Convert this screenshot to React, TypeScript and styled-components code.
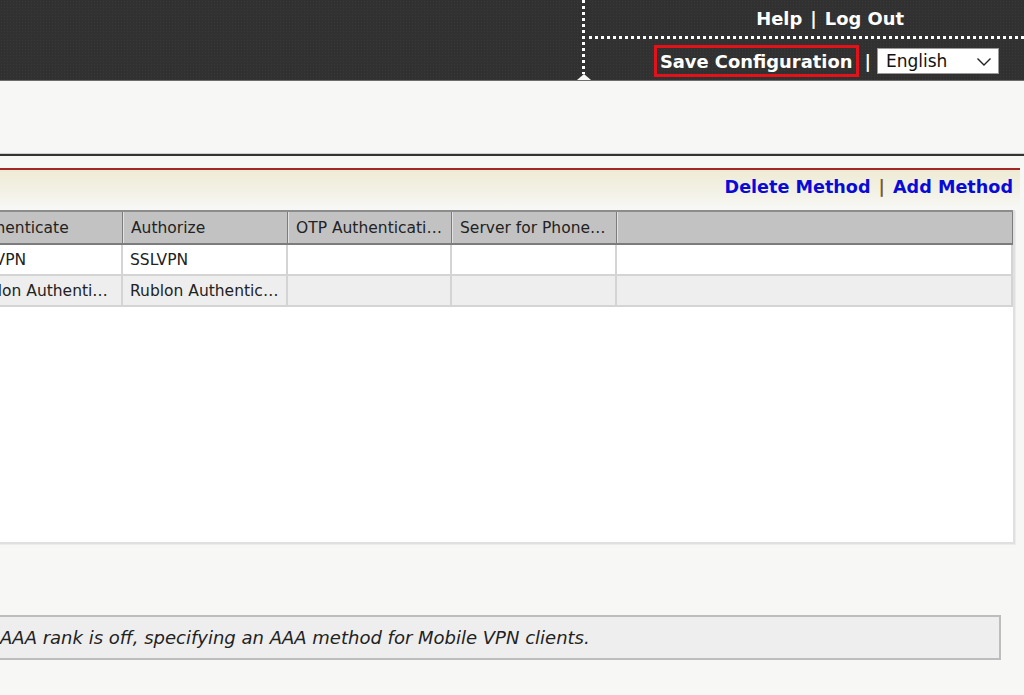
import React from 'react';
import styled, { createGlobalStyle } from 'styled-components';

const Global = createGlobalStyle`
  html, body { margin: 0; padding: 0; background: #f7f7f5; overflow: hidden; }
  body { font-family: "DejaVu Sans", Verdana, sans-serif; color: #222; }
  * { box-sizing: border-box; }
`;

const OFFSET = 39;

const Page = styled.div`
  width: 1024px;
  height: 695px;
  overflow: hidden;
  display: flex;
  flex-direction: column;
`;

const Header = styled.header`
  flex-shrink: 0;
  height: 81px;
  background-color: #313131;
  background-image: radial-gradient(rgba(255,255,255,0.04) 0.7px, transparent 0.9px);
  background-size: 3px 3px;
  border-bottom: 1px solid #6e6e6e;
  display: flex;
  justify-content: flex-end;
`;

const Panel = styled.div`
  width: 442px;
  display: flex;
  position: relative;
`;

const VDots = styled.div`
  width: 3px;
  margin-bottom: 6px;
  background: repeating-linear-gradient(to bottom, #fff 0 3px, transparent 3px 6px);
`;

const Notch = styled.div`
  position: absolute;
  left: -5px;
  bottom: 0;
  width: 0;
  height: 0;
  border-left: 7px solid transparent;
  border-right: 7px solid transparent;
  border-bottom: 6px solid #f7f7f5;
`;

const PanelBody = styled.div`
  flex: 1;
  display: flex;
  flex-direction: column;
`;

const TopRow = styled.div`
  height: 36px;
  display: flex;
  align-items: center;
  justify-content: flex-end;
  padding-right: 120px;
  gap: 8px;
`;

const HDots = styled.div`
  height: 3px;
  margin-left: 4px;
  background: repeating-linear-gradient(to right, #fff 0 3px, transparent 3px 6px);
`;

const BottomRow = styled.div`
  flex: 1;
  display: flex;
  align-items: center;
  justify-content: flex-end;
  padding: 3px 25px 0 0;
  gap: 5px;
`;

const HeadLink = styled.a`
  color: #fff;
  font-weight: bold;
  font-size: 17.9px;
  text-decoration: none;
  white-space: nowrap;
`;

const Pipe = styled.span`
  color: #fff;
  font-weight: bold;
  font-size: 17.9px;
`;

const SaveBox = styled.a`
  display: flex;
  align-items: center;
  height: 32px;
  border: 3px solid #e2121b;
  padding: 0 4px 0 3px;
  color: #fff;
  font-weight: bold;
  font-size: 17.9px;
  text-decoration: none;
  white-space: nowrap;
`;

const SelectWrap = styled.div`
  position: relative;
  width: 122px;
  height: 26px;
  margin-left: 1px;
  background: #fff;
  border: 1px solid #9a9a9a;
  display: flex;
  align-items: center;
  padding-left: 8px;
  font-size: 17px;
  color: #111;
`;

const Chevron = styled.svg`
  position: absolute;
  right: 6px;
  top: 7px;
`;

const Main = styled.main`
  width: ${1024 + OFFSET}px;
  margin-left: -${OFFSET}px;
  display: flex;
  flex-direction: column;
`;

const DarkRule = styled.div`
  margin-top: 72px;
  height: 3px;
  background: #333;
  border-top: 1px solid #cfcfcf;
`;

const ToolBand = styled.div`
  margin: 12px 4px 0 0;
  height: 40px;
  border-top: 2px solid #a32727;
  background: linear-gradient(to bottom, #eeebd4 0%, #f2f0e2 45%, #f7f7f5 100%);
  display: flex;
  align-items: center;
  justify-content: flex-end;
  padding: 0 7px 4px 0;
  gap: 8px;
`;

const ActionLink = styled.a`
  color: #0a0ad8;
  font-weight: bold;
  font-size: 17.6px;
  text-decoration: none;
  white-space: nowrap;
`;

const ActionPipe = styled.span`
  color: #7a5a2a;
  font-weight: bold;
  font-size: 17.6px;
`;

const TableFrame = styled.div`
  margin: 2px 9px 0 0;
  height: 334px;
  background: #fff;
  border-right: 2px solid #e0e0e0;
  border-bottom: 2px solid #e0e0e0;
  box-shadow: 1px 1px 0 #ececec;
`;

const COLS = `${123 + OFFSET}px 165px 164px 165px 1fr`;

const HeadRow = styled.div`
  display: grid;
  grid-template-columns: ${COLS};
  height: 35px;
  background: #c2c2c2;
  border-top: 2px solid #8c8c8c;
  border-bottom: 2px solid #7c7c7c;
`;

const HeadCell = styled.div`
  display: flex;
  align-items: center;
  padding: 0 7px;
  font-size: 15.5px;
  color: #222;
  border-left: 1px solid #e2e2e2;
  border-right: 1px solid #7c7c7c;
  white-space: nowrap;
  overflow: hidden;
  min-width: 0;
  span { overflow: hidden; text-overflow: ellipsis; }
`;

const BodyRow = styled.div<{ $alt?: boolean }>`
  display: grid;
  grid-template-columns: ${COLS};
  height: 31px;
  background: ${p => (p.$alt ? '#eeeeee' : '#ffffff')};
  border-bottom: 2px solid #d4d4d4;
`;

const Cell = styled.div`
  display: flex;
  align-items: center;
  padding: 0 7px;
  font-size: 15.5px;
  color: #222;
  border-right: 2px solid #d4d4d4;
  white-space: nowrap;
  overflow: hidden;
  min-width: 0;
  span { overflow: hidden; text-overflow: ellipsis; }
`;

const Notice = styled.div`
  margin: 71px 23px 0 0;
  height: 45px;
  background: #eeeeee;
  border: 2px solid #bdbdbd;
  display: flex;
  align-items: center;
  padding-left: ${OFFSET - 2}px;
  font-style: italic;
  font-size: 18px;
  color: #222;
  white-space: nowrap;
`;

const headers = ['Authenticate', 'Authorize', 'OTP Authentication Server', 'Server for Phone Factor', ''];
const rows = [
  ['SSLVPN', 'SSLVPN', '', '', ''],
  ['Rublon Authentication', 'Rublon Authentication', '', '', ''],
];

export default function App() {
  return (
    <Page>
      <Global />
      <Header>
        <Panel>
          <VDots />
          <Notch />
          <PanelBody>
            <TopRow>
              <HeadLink href="#">Help</HeadLink>
              <Pipe>|</Pipe>
              <HeadLink href="#">Log Out</HeadLink>
            </TopRow>
            <HDots />
            <BottomRow>
              <SaveBox href="#">Save Configuration</SaveBox>
              <Pipe>|</Pipe>
              <SelectWrap>
                English
                <Chevron width="16" height="11" viewBox="0 0 16 11" fill="none">
                  <path d="M1.5 2.5 L8 9 L14.5 2.5" stroke="#222" strokeWidth="1.4" />
                </Chevron>
              </SelectWrap>
            </BottomRow>
          </PanelBody>
        </Panel>
      </Header>
      <Main>
        <DarkRule />
        <ToolBand>
          <ActionLink href="#">Delete Method</ActionLink>
          <ActionPipe>|</ActionPipe>
          <ActionLink href="#">Add Method</ActionLink>
        </ToolBand>
        <TableFrame>
          <HeadRow>
            {headers.map((h, i) => (
              <HeadCell key={i}><span>{h}</span></HeadCell>
            ))}
          </HeadRow>
          {rows.map((r, ri) => (
            <BodyRow key={ri} $alt={ri % 2 === 1}>
              {r.map((c, ci) => (
                <Cell key={ci}><span>{c}</span></Cell>
              ))}
            </BodyRow>
          ))}
        </TableFrame>
        <Notice>AAA rank is off, specifying an AAA method for Mobile VPN clients.</Notice>
      </Main>
    </Page>
  );
}
